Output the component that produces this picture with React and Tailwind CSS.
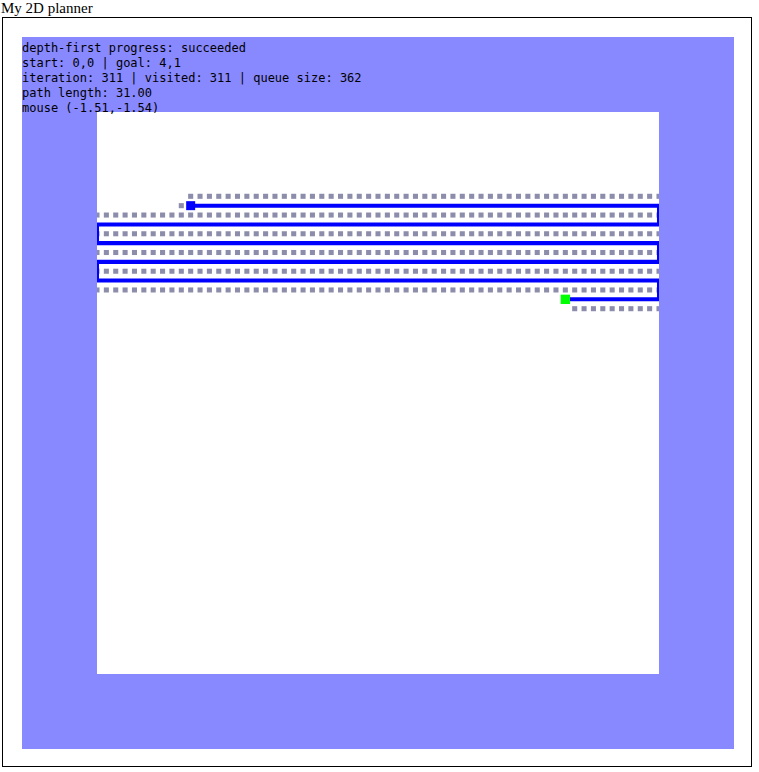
import React from "react";

const path = "0,0 50,0 50,2 -10,2 -10,4 50,4 50,6 -10,6 -10,8 50,8 50,10 40,10";

const range = (a, b) => {
    const out = [];
    for (let i = a; i <= b; i++) out.push(i);
    return out;
};

// visited cells that are not on the final path
const visited = [
    ...range(0, 50).map((x) => [x, -1]),
    [-1, 0],
    ...[1, 3, 5, 7, 9].flatMap((y) => range(-10, 50).map((x) => [x, y])),
    ...range(41, 50).map((x) => [x, 11]),
];

const lines = [
    "depth-first progress: succeeded",
    "start: 0,0 | goal: 4,1",
    "iteration: 311 | visited: 311 | queue size: 362",
    "path length: 31.00",
    "mouse (-1.51,-1.54)",
];

function Planner() {
    const d = 0.54;
    return (
        <svg width="562" height="562" viewBox="-10 -10 60 60" className="block">
            {visited.map(([x, y]) => (
                <rect key={`${x}:${y}`} x={x - d / 2} y={y - d / 2} width={d} height={d} fill="#8c8cab" />
            ))}
            <polyline points={path} fill="none" stroke="#0000ff" strokeWidth="0.43" strokeLinejoin="miter" />
            <rect x={-0.48} y={-0.48} width={0.96} height={0.96} fill="#0000ff" />
            <rect x={39.5} y={9.5} width={1} height={1} fill="#00ff00" />
        </svg>
    );
}

export default function App() {
    return (
        <div className="font-['Liberation_Serif',serif] text-black">
            <div className="pl-[1px] text-[15px] leading-[17px]">My 2D planner</div>
            <div className="ml-[2px] w-[750px] h-[750px] border border-black">
                <div className="relative ml-[19px] mt-[19px] w-[712px] h-[712px] bg-[#8888ff] pt-[75px] pl-[75px]">
                    <div className="w-[562px] h-[562px] bg-white">
                        <Planner />
                    </div>
                    <div className="absolute left-0 top-[4px] font-['DejaVu_Sans_Mono',monospace] text-[12px] leading-[15px] whitespace-pre">
                        {lines.map((l) => (
                            <div key={l}>{l}</div>
                        ))}
                    </div>
                </div>
            </div>
        </div>
    );
}
